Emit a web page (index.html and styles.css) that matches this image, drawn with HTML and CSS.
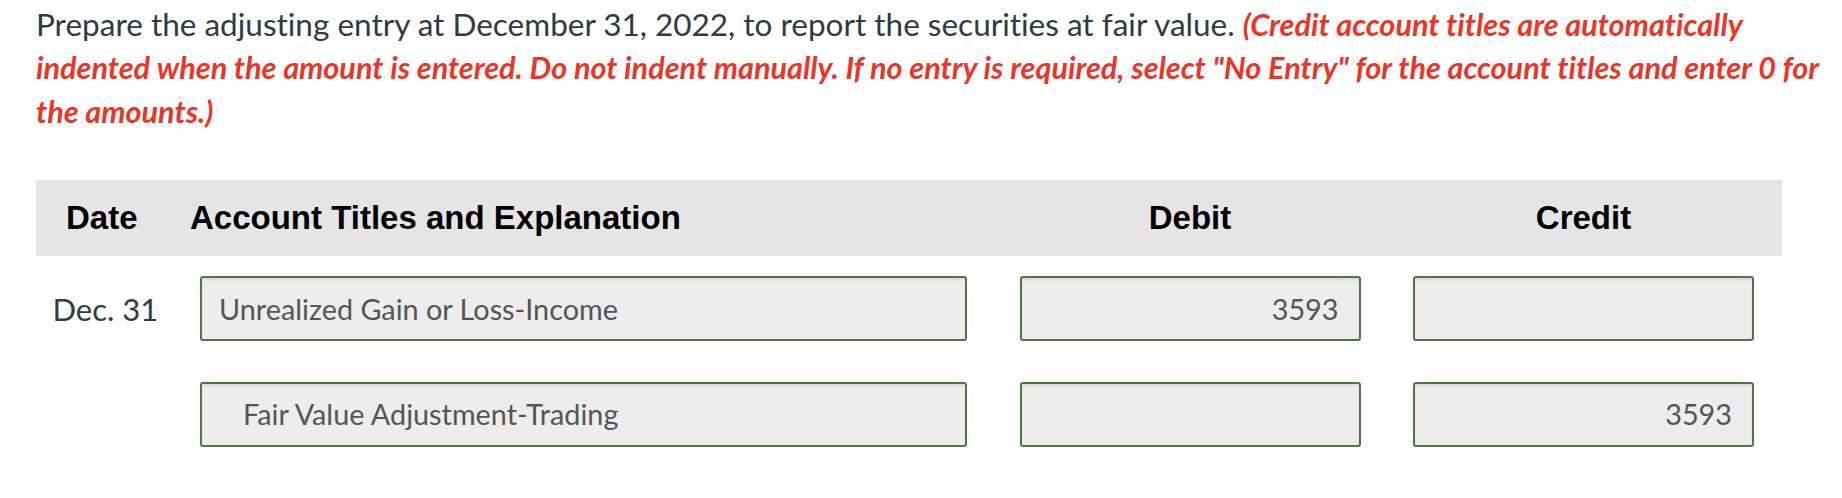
FILE: index.html
```html
<!DOCTYPE html>
<html lang="en">
<head>
    <meta charset="UTF-8">
    <meta name="viewport" content="width=device-width, initial-scale=1.0">
    <title>Adjusting entry</title>
    <link rel="stylesheet" href="styles.css">
</head>
<body>
    <div class="page">
        <p class="prompt">
            Prepare the adjusting entry at December 31, 2022, to report the securities at fair value.
            <span class="note">(Credit account titles are automatically indented when the amount is entered. Do not indent manually. If no entry is required, select "No Entry" for the account titles and enter 0 for the amounts.)</span>
        </p>

        <div class="journal">
            <div class="journal-head">
                <div class="head-date">Date</div>
                <div class="head-account">Account Titles and Explanation</div>
                <div class="head-amount">Debit</div>
                <div class="head-amount">Credit</div>
            </div>

            <div class="journal-row">
                <div class="row-date">Dec. 31</div>
                <div class="field">Unrealized Gain or Loss-Income</div>
                <div class="field amount">3593</div>
                <div class="field amount"></div>
            </div>

            <div class="journal-row">
                <div class="row-date"></div>
                <div class="field indent">Fair Value Adjustment-Trading</div>
                <div class="field amount"></div>
                <div class="field amount">3593</div>
            </div>
        </div>
    </div>
</body>
</html>
```

FILE: styles.css
```css
body {
    margin: 0;
    background: #fff;
    font-family: Lato, "Open Sans", sans-serif;
    font-variant-ligatures: none;
}

.page {
    padding: 3px 0 0 36px;
    width: 1800px;
}

.prompt {
    margin: 0;
    font-size: 31.5px;
    line-height: 43.4px;
    color: #2d3b45;
}

.note {
    font-size: 30.6px;
    color: #ea3527;
    font-weight: bold;
    font-style: italic;
}

.journal {
    margin-top: 46.5px;
    width: 1746px;
}

.journal-head,
.journal-row {
    display: grid;
    grid-template-columns: 164px 767px 393.5px 393.5px;
    align-items: center;
}

.journal-head {
    height: 76px;
    background: #e5e5e5;
    font-family: "Liberation Sans", Arial, sans-serif;
    font-size: 33px;
    font-weight: bold;
    color: #000;
}

.head-date {
    padding-left: 30px;
}

.head-account {
    margin-left: -10px;
}

.head-amount {
    margin-left: 52.5px;
    text-align: center;
}

.journal-row {
    margin-top: 40.5px;
}

.journal-head + .journal-row {
    margin-top: 20.5px;
}

.row-date {
    padding-left: 16.5px;
    font-size: 31px;
    color: #2d3b45;
}

.field {
    box-sizing: border-box;
    height: 65px;
    display: flex;
    align-items: center;
    padding: 0 17px;
    border: 2px solid #4a7a40;
    border-radius: 3px;
    background: #ededed;
    box-shadow: inset 0 2px 2px rgba(0,0,0,.07);
    font-size: 28.8px;
    color: #555;
}

.field.indent {
    padding-left: 41px;
}

.field.amount {
    margin-left: 52.5px;
    justify-content: flex-end;
    padding-right: 20px;
}
```
